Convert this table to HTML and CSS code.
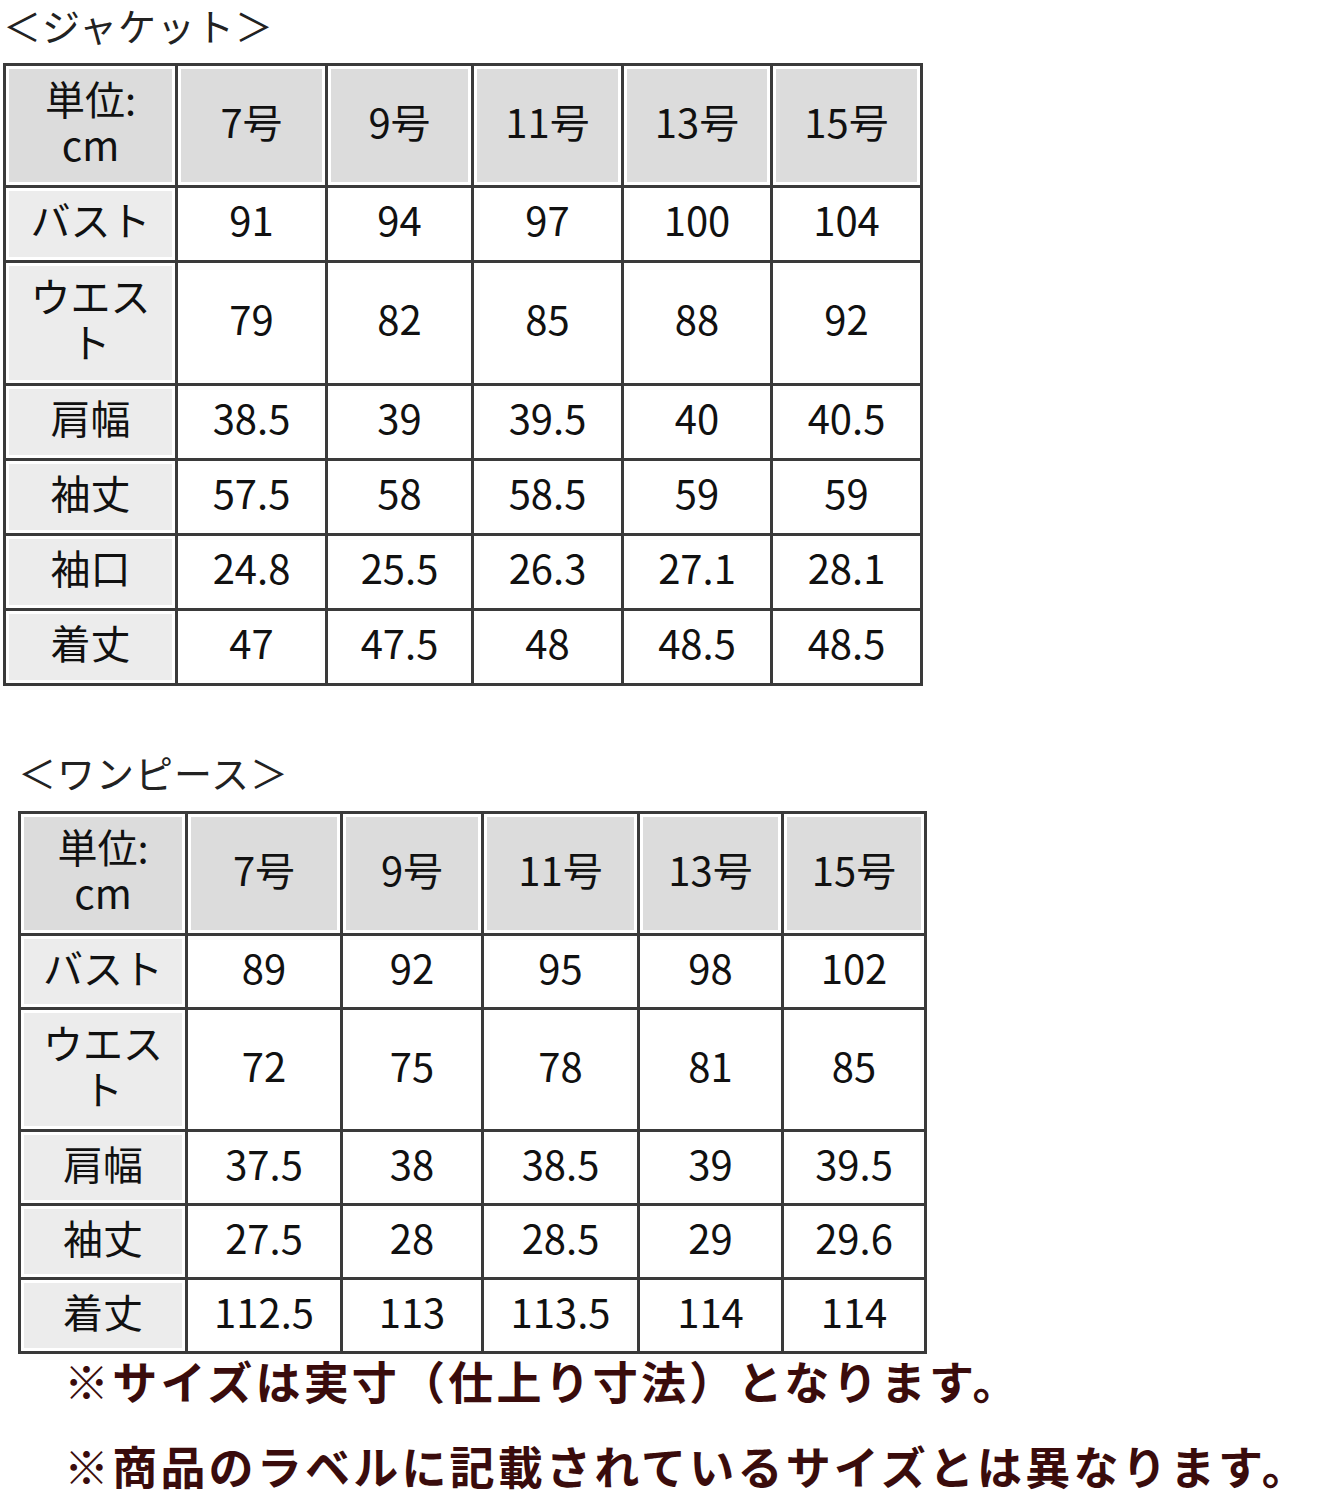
FILE: index.html
```html
<!DOCTYPE html>
<html lang="ja">
<head>
<meta charset="utf-8">
<title>サイズ表</title>
<link rel="stylesheet" href="styles.css">
</head>
<body>
<section class="sec sec-jacket">
  <div class="title">＜ジャケット＞</div>
  <table class="size t1">
    <colgroup><col><col><col><col><col><col></colgroup>
    <tr class="r-head">
      <th class="corner"><span class="ln">単位:</span><span class="ln">cm</span></th><th>7号</th><th>9号</th><th>11号</th><th>13号</th><th>15号</th>
    </tr>
    <tr class="r-std"><th class="rh">バスト</th><td>91</td><td>94</td><td>97</td><td>100</td><td>104</td></tr>
    <tr class="r-tall"><th class="rh"><span class="ln">ウエス</span><span class="ln">ト</span></th><td>79</td><td>82</td><td>85</td><td>88</td><td>92</td></tr>
    <tr class="r-std"><th class="rh">肩幅</th><td>38.5</td><td>39</td><td>39.5</td><td>40</td><td>40.5</td></tr>
    <tr class="r-std"><th class="rh">袖丈</th><td>57.5</td><td>58</td><td>58.5</td><td>59</td><td>59</td></tr>
    <tr class="r-std"><th class="rh">袖口</th><td>24.8</td><td>25.5</td><td>26.3</td><td>27.1</td><td>28.1</td></tr>
    <tr class="r-std"><th class="rh">着丈</th><td>47</td><td>47.5</td><td>48</td><td>48.5</td><td>48.5</td></tr>
  </table>
</section>
<section class="sec sec-onepiece">
  <div class="title">＜ワンピース＞</div>
  <table class="size t2">
    <colgroup><col><col><col><col><col><col></colgroup>
    <tr class="r-head">
      <th class="corner"><span class="ln">単位:</span><span class="ln">cm</span></th><th>7号</th><th>9号</th><th>11号</th><th>13号</th><th>15号</th>
    </tr>
    <tr class="r-std"><th class="rh">バスト</th><td>89</td><td>92</td><td>95</td><td>98</td><td>102</td></tr>
    <tr class="r-tall"><th class="rh"><span class="ln">ウエス</span><span class="ln">ト</span></th><td>72</td><td>75</td><td>78</td><td>81</td><td>85</td></tr>
    <tr class="r-std"><th class="rh">肩幅</th><td>37.5</td><td>38</td><td>38.5</td><td>39</td><td>39.5</td></tr>
    <tr class="r-std"><th class="rh">袖丈</th><td>27.5</td><td>28</td><td>28.5</td><td>29</td><td>29.6</td></tr>
    <tr class="r-std"><th class="rh">着丈</th><td>112.5</td><td>113</td><td>113.5</td><td>114</td><td>114</td></tr>
  </table>
  <p class="note note1">※サイズは実寸（仕上り寸法）となります。</p>
  <p class="note note2">※商品のラベルに記載されているサイズとは異なります。</p>
</section>
</body>
</html>
```
FILE: styles.css
```css
html, body {
  margin: 0;
  padding: 0;
  background: #fff;
}
body {
  font-family: "Noto Sans CJK JP", "Noto Sans", sans-serif;
  color: #111;
}
.sec-jacket {
  padding-left: 3px;
}
.sec-onepiece {
  padding-left: 18px;
  margin-top: 61px;
}
.title {
  font-size: 38px;
  line-height: 50px;
  height: 50px;
  font-weight: 400;
  color: #222;
  white-space: nowrap;
  letter-spacing: 1px;
}
.size {
  border-collapse: collapse;
  table-layout: fixed;
  border: 3px solid #3a3a3a;
}
.t1 {
  margin-top: 13px;
  width: 920px;
}
.t2 {
  margin-top: 14px;
  width: 908px;
}
.t1 col:nth-child(1) { width: 172px; }
.t1 col:nth-child(2) { width: 150px; }
.t1 col:nth-child(3) { width: 146px; }
.t1 col:nth-child(4) { width: 150px; }
.t1 col:nth-child(5) { width: 149px; }
.t1 col:nth-child(6) { width: 150px; }
.t2 col:nth-child(1) { width: 167px; }
.t2 col:nth-child(2) { width: 155px; }
.t2 col:nth-child(3) { width: 141px; }
.t2 col:nth-child(4) { width: 156px; }
.t2 col:nth-child(5) { width: 144px; }
.t2 col:nth-child(6) { width: 143px; }

.size th, .size td {
  border: 3px solid #3a3a3a;
  padding: 0 6px 10px;
  text-align: center;
  vertical-align: middle;
  font-size: 40px;
  line-height: 46px;
  font-weight: 400;
  color: #111;
  box-shadow: inset 0 0 0 3px #fff;
}
.size .ln {
  display: block;
  height: 46px;
  line-height: 46px;
}
.size td {
  background: #fff;
}
.r-head th {
  background: #dcdcdc;
}
.size th.rh {
  background: #ececec;
}
.r-head { height: 122px; }
.r-std { height: 75px; }
.r-tall { height: 123px; }
.t2 .r-std { height: 74px; }
.t2 .r-tall { height: 122px; }

.note {
  margin: 0;
  padding-left: 46px;
  font-size: 45px;
  line-height: 54px;
  font-weight: 700;
  letter-spacing: 3.2px;
  color: #3a0c0c;
  white-space: nowrap;
}
.note2 {
  margin-top: 31px;
}
```
